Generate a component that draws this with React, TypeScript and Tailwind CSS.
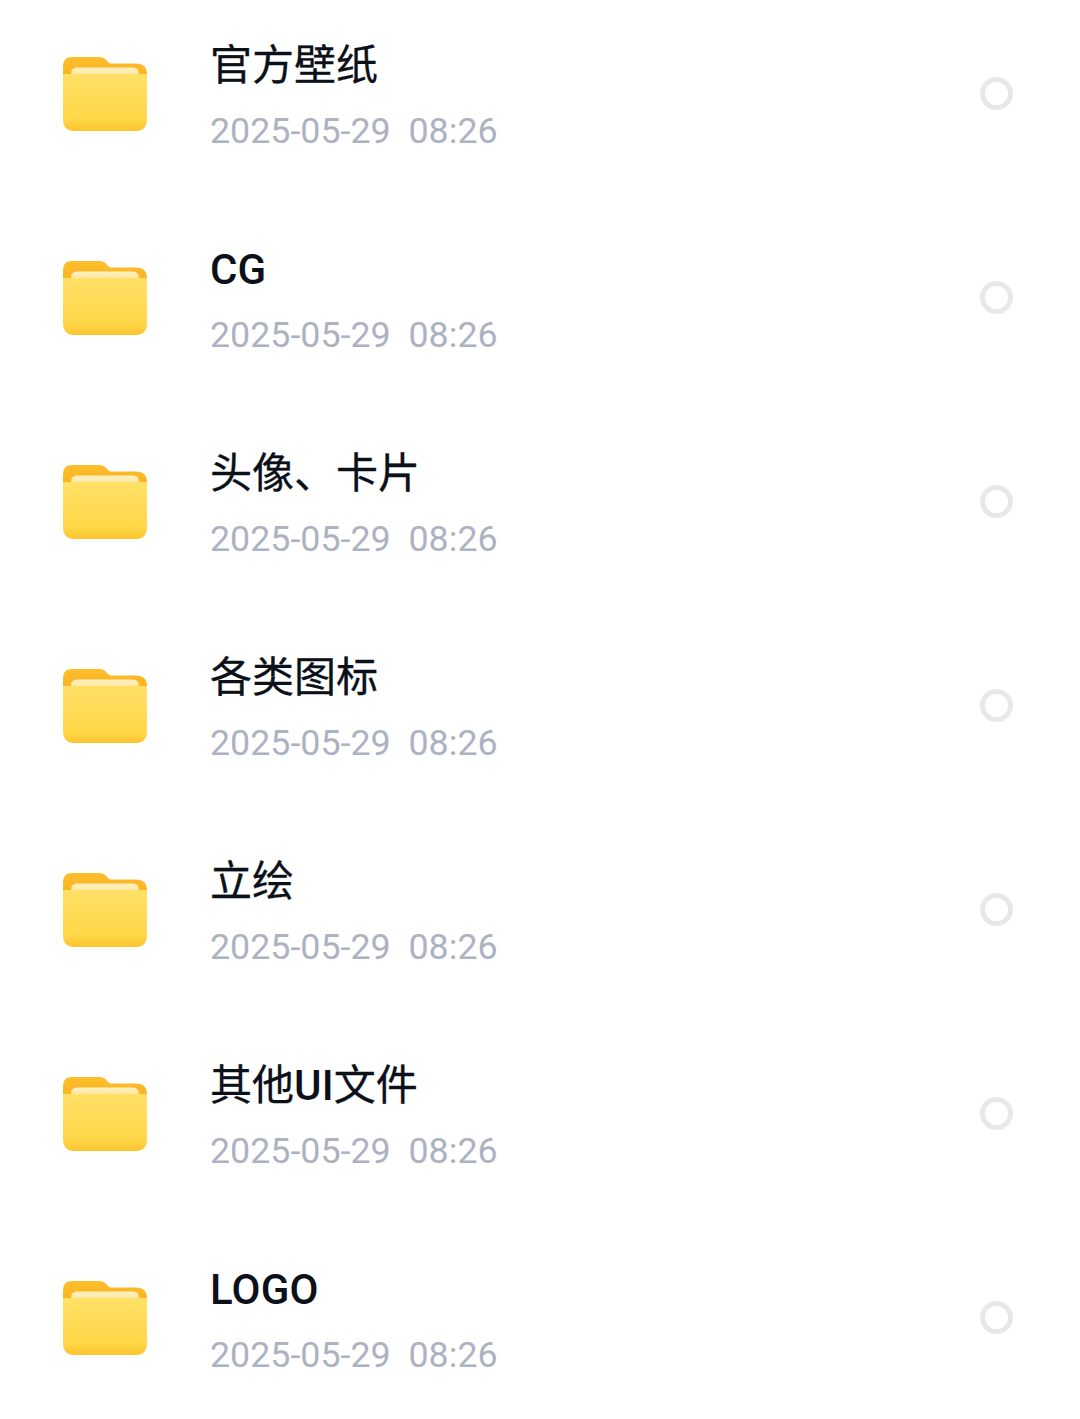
const rows = ["官方壁纸", "CG", "头像、卡片", "各类图标", "立绘", "其他UI文件", "LOGO"];

function FolderIcon() {
  return (
    <svg width="86" height="76" viewBox="0 0 86 76" className="shrink-0 blur-[0.6px]">
      <defs>
        <linearGradient id="folderBack" x1="0" y1="0" x2="0" y2="1">
          <stop offset="0" stopColor="#fdbe2c" />
          <stop offset="1" stopColor="#f9ae1c" />
        </linearGradient>
        <linearGradient id="folderFront" x1="0" y1="0" x2="0" y2="1">
          <stop offset="0" stopColor="#ffe067" />
          <stop offset="0.8" stopColor="#ffd748" />
          <stop offset="1" stopColor="#fcc42c" />
        </linearGradient>
        <linearGradient id="folderPaper" x1="0" y1="0" x2="0" y2="1">
          <stop offset="0" stopColor="#fdf0c0" />
          <stop offset="1" stopColor="#fde08a" />
        </linearGradient>
      </defs>
      <path
        d="M1 11C1 4 4 1 10 1H37C41 1 43 2.500 45 5C47 7.500 49 7.500 52 7.500H74C81 7.500 85 11 85 18V30H1Z"
        fill="url(#folderBack)"
      />
      <path d="M9 19C9 13.500 11 11.500 16 11.500H70C75 11.500 77 13.500 77 19V24H9Z" fill="url(#folderPaper)" />
      <path
        d="M1 18H85V63C85 71 81 75 74 75H12C5 75 1 71 1 63Z"
        fill="url(#folderFront)"
      />
    </svg>
  );
}

// Latin runs are medium, CJK sits between regular and medium so it gets a thin stroke
function Title({ name }: { name: string }) {
  return (
    <div className="h-[60px] text-[42px] leading-[60px] text-[#0b1019]">
      {name.split(/([A-Za-z]+)/).map((part, i) =>
        /[A-Za-z]/.test(part) ? (
          <span key={i} className="font-medium tracking-[0.2px]">{part}</span>
        ) : (
          <span key={i} className="[-webkit-text-stroke:0.3px_#0b1019]">{part}</span>
        )
      )}
    </div>
  );
}

export default function App() {
  return (
    <div className="w-[1080px] h-[1419px] overflow-hidden bg-white font-['Roboto','Noto_Sans_CJK_SC',sans-serif]">
      {rows.map((name) => (
        <div key={name} className="flex h-[204px] items-start pl-[62px] pr-[67px]">
          <div className="mt-[56px]">
            <FolderIcon />
          </div>
          <div className="ml-[62px] mt-[36px] flex-1">
            <Title name={name} />
            <div className="mt-[13px] text-[35.8px] leading-[44px] whitespace-pre text-[#adb2c2]">2025-05-29  08:26</div>
          </div>
          <div className="mt-[77px] size-[33px] rounded-full border-[5px] border-[#e8e8e8]" />
        </div>
      ))}
    </div>
  );
}
